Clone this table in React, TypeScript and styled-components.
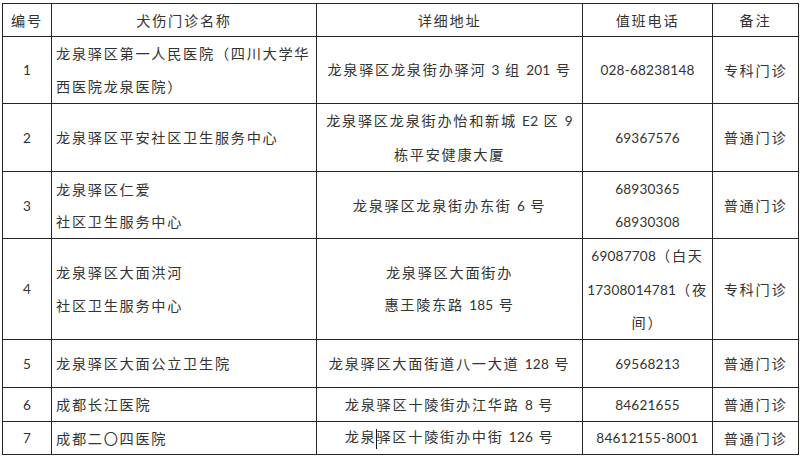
import React from "react";
import styled, { createGlobalStyle } from "styled-components";

const GlobalStyle = createGlobalStyle`
  html, body { margin: 0; padding: 0; background: #ffffff; }
  body { font-family: "Noto Sans CJK SC", "Noto Sans", sans-serif; }
`;

const Page = styled.div`
  padding: 3px 0 0 2px;
  width: 800px;
  height: 457px;
  box-sizing: border-box;
  background: #fff;
  overflow: hidden;
`;

const Table = styled.table`
  border-collapse: collapse;
  table-layout: fixed;
  width: 796px;
  color: #333333;
  font-family: "Noto Sans CJK SC", "Noto Sans", sans-serif;
  font-size: 14.2px;
  letter-spacing: 1.7px;
`;

const Row = styled.tr<{ $h: number }>`
  height: ${(p) => p.$h}px;
`;

const Cell = styled.td<{ $align?: "left" | "center"; $lh?: number }>`
  border: 1px solid #262626;
  padding: 0 0 0 ${(p) => (p.$align === "left" ? "4px" : "0")};
  text-align: ${(p) => p.$align ?? "center"};
  vertical-align: middle;
  line-height: ${(p) => p.$lh ?? 33}px;
  white-space: nowrap;
  overflow: hidden;
`;

const HeadCell = styled(Cell).attrs({ as: "th" })`
  font-weight: normal;
  line-height: 20px;
`;

const Latin = styled.span`
  font-family: Lato, "Open Sans", sans-serif;
  font-size: 13.6px;
  letter-spacing: 0.2px;
  word-spacing: 1.6px;
`;

const Caret = styled.span`
  display: inline-block;
  width: 1.5px;
  height: 20px;
  margin: 0 -1px 0 -0.5px;
  background: #111;
  vertical-align: middle;
`;

function T({ s }: { s: string }) {
  const parts = s.split(/([\x20-\x7e]+)/).filter((x) => x.length > 0);
  return (
    <>
      {parts.map((p, i) =>
        /^[\x20-\x7e]+$/.test(p) ? <Latin key={i}>{p}</Latin> : <React.Fragment key={i}>{p}</React.Fragment>
      )}
    </>
  );
}

function Lines({ lines }: { lines: string[] }) {
  return (
    <>
      {lines.map((l, i) => (
        <React.Fragment key={i}>
          {i > 0 && <br />}
          <T s={l} />
        </React.Fragment>
      ))}
    </>
  );
}

type RowData = {
  no: string;
  h: number;
  lh: number;
  name: string[];
  addr: string[];
  phone: string[];
  note: string;
  caret?: boolean;
};

const rows: RowData[] = [
  { no: "1", h: 67, lh: 33, name: ["龙泉驿区第一人民医院（四川大学华", "西医院龙泉医院）"], addr: ["龙泉驿区龙泉街办驿河 3 组 201 号"], phone: ["028-68238148"], note: "专科门诊" },
  { no: "2", h: 68, lh: 33, name: ["龙泉驿区平安社区卫生服务中心"], addr: ["龙泉驿区龙泉街办怡和新城 E2 区 9", "栋平安健康大厦"], phone: ["69367576"], note: "普通门诊" },
  { no: "3", h: 66, lh: 32, name: ["龙泉驿区仁爱", "社区卫生服务中心"], addr: ["龙泉驿区龙泉街办东街 6 号"], phone: ["68930365", "68930308"], note: "普通门诊" },
  { no: "4", h: 100, lh: 32.5, name: ["龙泉驿区大面洪河", "社区卫生服务中心"], addr: ["龙泉驿区大面街办", "惠王陵东路 185 号"], phone: ["69087708（白天", "17308014781（夜", "间）"], note: "专科门诊" },
  { no: "5", h: 48, lh: 20, name: ["龙泉驿区大面公立卫生院"], addr: ["龙泉驿区大面街道八一大道 128 号"], phone: ["69568213"], note: "普通门诊" },
  { no: "6", h: 34, lh: 20, name: ["成都长江医院"], addr: ["龙泉驿区十陵街办江华路 8 号"], phone: ["84621655"], note: "普通门诊" },
  { no: "7", h: 33, lh: 20, name: ["成都二〇四医院"], addr: ["龙泉驿区十陵街办中街 126 号"], phone: ["84612155-8001"], note: "普通门诊", caret: true },
];

export default function App() {
  return (
    <Page>
      <GlobalStyle />
      <Table>
        <colgroup>
          <col style={{ width: 49 }} />
          <col style={{ width: 265 }} />
          <col style={{ width: 266 }} />
          <col style={{ width: 130 }} />
          <col style={{ width: 86 }} />
        </colgroup>
        <thead>
          <Row $h={33}>
            <HeadCell>编号</HeadCell>
            <HeadCell>犬伤门诊名称</HeadCell>
            <HeadCell>详细地址</HeadCell>
            <HeadCell>值班电话</HeadCell>
            <HeadCell>备注</HeadCell>
          </Row>
        </thead>
        <tbody>
          {rows.map((r) => (
            <Row key={r.no} $h={r.h}>
              <Cell $lh={r.lh}>
                <T s={r.no} />
              </Cell>
              <Cell $align="left" $lh={r.lh}>
                <Lines lines={r.name} />
              </Cell>
              <Cell $lh={r.lh}>
                {r.caret ? (
                  <>
                    龙泉
                    <Caret />
                    <T s="驿区十陵街办中街 126 号" />
                  </>
                ) : (
                  <Lines lines={r.addr} />
                )}
              </Cell>
              <Cell $lh={r.lh}>
                <Lines lines={r.phone} />
              </Cell>
              <Cell $lh={r.lh}>{r.note}</Cell>
            </Row>
          ))}
        </tbody>
      </Table>
    </Page>
  );
}
